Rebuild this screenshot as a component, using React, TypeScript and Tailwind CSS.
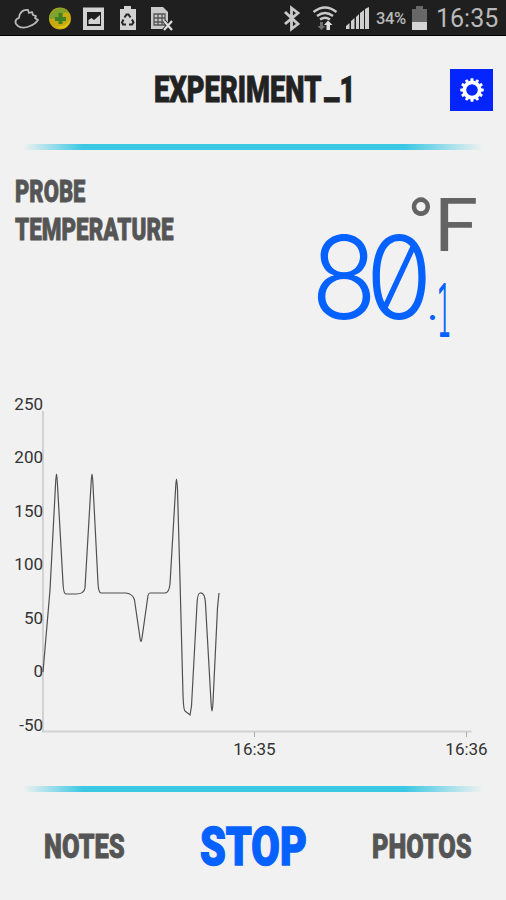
import type { ReactNode } from 'react'

/* ------------------------------------------------------------------ */
/*  Status bar                                                        */
/* ------------------------------------------------------------------ */

function StatusBar() {
  return (
    <div className="flex h-9 shrink-0 items-center border-b border-black bg-[#1f1f1f] text-[#b9b9b9]">
      <svg width="180" height="36" viewBox="0 0 180 36" className="shrink-0">
        <path
          d="M18 26c-4-3-3-7 1-8 0-5 4-9 9-8l1 3 3-1 1 3 3 1-1 2 3 2c-2 3-5 5-8 6-4 2-9 2-12 0z"
          fill="none"
          stroke="#b9b9b9"
          strokeWidth="1.800"
          strokeLinejoin="round"
        />
        <circle cx="60" cy="18.500" r="11" fill="#c9a910" />
        <path d="M49 18c2-10 15-14 20-5-5-2-8 2-12 4-3 2-5 3-8 1z" fill="#7fa32c" />
        <path d="M53 24c5 5 12 3 17-4-1 8-10 12-17 4z" fill="#e0c414" />
        <path d="M58.500 13h4v4h3.500v4h-3.500v3h-4v-3H55v-4h3.500z" fill="#3c8122" />
        <path d="M83 7.500h21V30H83z" fill="#d2d2d2" />
        <path d="M87 12h14v14H87z" fill="#1f1f1f" />
        <path d="M88.500 24v-4l3-2 2.500 2 6-5v9z" fill="#d2d2d2" />
        <path d="M120 9h4V6h7v3h5v21h-16z" fill="#d2d2d2" />
        <g fill="none" stroke="#242424" strokeWidth="2">
          <path d="m124.500 17.500 2-3h2l2 3M132 19.500l1.500 3-1.500 2h-3M126 24.500h-3l-1-2 1.500-3" />
        </g>
        <path d="M151 7h12l5 5v17h-17z" fill="#cacaca" />
        <path d="M154 14h11v11h-11zM154 18h11M154 22h11M158 14v11M162 14v11" fill="none" stroke="#555" strokeWidth="1.300" />
        <path d="m164 21 8 9m0-9-8 9" stroke="#1f1f1f" strokeWidth="4" />
        <path d="m164 21 8 9m0-9-8 9" stroke="#dedede" strokeWidth="2.200" />
      </svg>
      <svg width="92" height="36" viewBox="282 0 92 36" className="ml-[102px] shrink-0">
        <path d="m285 12 13 12-6.500 5V8l6.500 5-13 11" fill="none" stroke="#c9c9c9" strokeWidth="2.800" />
        <g fill="none" stroke="#c9c9c9" strokeWidth="2.300">
          <path d="M313.500 12q11.500-9 23 0" />
          <path d="M317 16q8-6 16 0" />
          <path d="M320 19.500q5-3.500 10 0" />
        </g>
        <path d="M320 22h3v4h2.500l-4 4-4-4h2.500z" fill="#707070" />
        <path d="m328 20.500 4.500 4.500H330v5h-3.500v-5H324z" fill="#dedede" />
        <path d="M346 29v-3l3.500-3v6zM351 29v-8l3.500-3v11zM356 29V17l3-3v15zM360 29V13l4-3v19zM365 29V9l4-2v22z" fill="#cfcfcf" />
      </svg>
      <span className="ml-[2px] w-[32px] font-['Roboto',sans-serif] text-[16.500px] leading-9 font-medium tracking-tight">
        <span className="relative top-px">34%</span>
      </span>
      <svg width="17" height="36" viewBox="0 0 17 36" className="ml-[3px] shrink-0">
        <path d="M1 9h4V6h7v3h4v20H1z" fill="#686868" />
        <path d="M1 22h15v8H1z" fill="#d5d5d5" />
      </svg>
      <span className="ml-[8px] pt-[2px] whitespace-nowrap font-['Roboto',sans-serif] text-[25px] leading-9">16:35</span>
    </div>
  )
}

/* ------------------------------------------------------------------ */
/*  Shared pieces                                                     */
/* ------------------------------------------------------------------ */

function Condensed({ className, children }: { className: string, children: ReactNode }) {
  return (
    <span className={`block origin-left whitespace-nowrap font-['Roboto',sans-serif] font-black ${className}`}>
      {children}
    </span>
  )
}

function Divider() {
  return (
    <div className="mx-[23px] h-[6px] shrink-0 bg-[linear-gradient(to_right,transparent,#3bc8e4_13%,#3bc8e4_83%,transparent)]" />
  )
}

function GearIcon() {
  const teeth = [0, 30, 60, 90, 120, 150, 180, 210, 240, 270, 300, 330]
  return (
    <svg width="26" height="26" viewBox="-13 -13 26 26">
      <circle r="7.700" fill="none" stroke="#fff" strokeWidth="3.800" />
      {teeth.map((angle) => (
        <path key={angle} d="M-1.700-9l.4-2.800h2.600l.4 2.800z" fill="#fff" transform={`rotate(${angle})`} />
      ))}
    </svg>
  )
}

/* ------------------------------------------------------------------ */
/*  Temperature chart                                                 */
/* ------------------------------------------------------------------ */

const Y_LABELS = [250, 200, 150, 100, 50, 0, -50]
const X_LABELS = [
  { x: 254, label: '16:35' },
  { x: 466, label: '16:36' },
]

const TRACE =
  'M43 672 50 590 55.500 485Q56.500 463 57.500 485L63 583Q63.500 594 66 594H76Q84 594 85 588L91 485Q92 463 93 485L98 583Q98.500 593 101 593H126Q133 594 134.500 600L140 638Q141 645 142 638L147.500 599Q148 593 150 593H165Q169 593 170 584L175.500 490Q176.500 468 177.500 490L180 580 183 695Q183.500 710 185 711L190 715 191.500 706 197 604Q197.500 593 200 593 205 592 205.500 604L211 702Q212 720 213 702L217.500 608 219 593'

function Chart() {
  return (
    <svg width="506" height="386" viewBox="0 390 506 386" className="shrink-0 font-['Roboto',sans-serif] text-[17px]">
      <path d="M43 411V731.500H471.500" fill="none" stroke="#d2d2d2" strokeWidth="2" />
      {Y_LABELS.map((value, i) => (
        <text key={value} x="43" y={409.7 + i * 53.5} textAnchor="end" fill="#333">{value}</text>
      ))}
      {X_LABELS.map(({ x, label }) => (
        <g key={label}>
          <path d={`M${x + 0.5} 732v5`} stroke="#aaa" />
          <text x={x + 0.5} y="755" textAnchor="middle" fill="#333">{label}</text>
        </g>
      ))}
      <path d={TRACE} fill="none" stroke="#505050" strokeWidth="1.200" />
    </svg>
  )
}

/* ------------------------------------------------------------------ */
/*  Screen                                                            */
/* ------------------------------------------------------------------ */

export default function App() {
  return (
    <div className="flex h-[900px] w-[506px] flex-col overflow-hidden bg-[#f1f1f1]">
      <StatusBar />

      <header className="flex h-[108px] shrink-0 items-center">
        <div className="ml-[154px] w-[296px]">
          <Condensed className="scale-x-[0.76] text-[36px] leading-[110px] text-[#222] [-webkit-text-stroke:0.8px_#222]">
            EXPERIMENT<span className="relative -top-[5px] mr-[4px] ml-[4px] inline-block origin-left scale-x-[1.250]">_</span>1
          </Condensed>
        </div>
        <button className="flex h-[42px] w-[43px] items-center justify-center bg-[#0525ff]" aria-label="Settings">
          <GearIcon />
        </button>
      </header>

      <Divider />

      <section className="flex h-[240px] shrink-0">
        <div className="w-[300px] pt-[23px] pl-[15px] text-[31px] leading-[38px] text-[#555] [-webkit-text-stroke:0.8px_#555]">
          <Condensed className="scale-x-[0.71]">PROBE</Condensed>
          <Condensed className="scale-x-[0.725]">TEMPERATURE</Condensed>
        </div>
        <div className="w-[206px] pt-[32px]">
          <div className="ml-[107px] flex h-[87px] font-['Roboto',sans-serif] text-[74px] leading-[87px] text-[#636363]">
            <span className="w-[27px]">°</span>
            <span className="origin-left scale-x-[1.080]">F</span>
          </div>
          <div className="-mt-[49px] ml-[11px] flex text-[#0561ff]">
            <span className="block w-[116px] origin-left scale-x-[0.940] font-['Inter',sans-serif] text-[115px] leading-[115px] font-light tracking-[-12px] slashed-zero">80</span>
            <span className="mt-[51px] block w-[10px] font-['Inter',sans-serif] text-[38px] leading-[70px]">.</span>
            <span className="mt-[52px] block origin-left scale-x-[0.320] font-['DejaVu_Sans_Light','DejaVu_Sans',sans-serif] text-[71px] leading-[80px] font-extralight [-webkit-text-stroke:2px_#0561ff]">1</span>
          </div>
        </div>
      </section>

      <Chart />
      <div className="h-[10px] shrink-0" />
      <Divider />

      <footer className="flex flex-1 items-center">
        <button className="ml-[44px] w-[156px] text-left">
          <Condensed className="scale-x-[0.75] text-[34px] text-[#555] [-webkit-text-stroke:0.8px_#555]">NOTES</Condensed>
        </button>
        <button className="w-[172px] text-left">
          <Condensed className="scale-x-[0.765] text-[54px] text-[#0561ff] [-webkit-text-stroke:1.500px_#0561ff]">STOP</Condensed>
        </button>
        <button className="w-[110px] text-left">
          <Condensed className="scale-x-[0.745] text-[34px] text-[#555] [-webkit-text-stroke:0.8px_#555]">PHOTOS</Condensed>
        </button>
      </footer>
    </div>
  )
}
